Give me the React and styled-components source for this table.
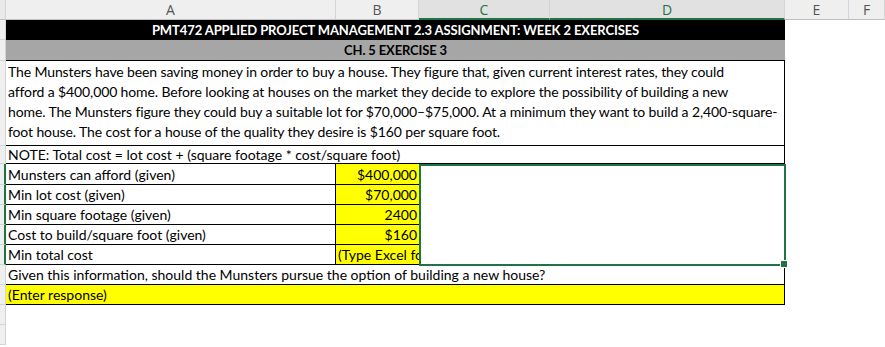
import styled, { createGlobalStyle } from "styled-components";

const GlobalStyle = createGlobalStyle`
  html, body {
    margin: 0;
    padding: 0;
    background: #ffffff;
    overflow: hidden;
  }
  body {
    font-family: Lato, "Liberation Sans", sans-serif;
  }
`;

const columns = ["A", "B", "C", "D", "E", "F"];
const selectedCols = ["C", "D"];

const paragraph = [
  "The Munsters have been saving money in order to buy a house. They figure that, given current interest rates, they could",
  "afford a $400,000 home. Before looking at houses on the market they decide to explore the possibility of building a new",
  "home. The Munsters figure they could buy a suitable lot for $70,000\u2013$75,000. At a minimum they want to build a 2,400-square-",
  "foot house. The cost for a house of the quality they desire is $160 per square foot.",
];

const givens = [
  { label: "Munsters can afford (given)", value: "$400,000" },
  { label: "Min lot cost (given)", value: "$70,000" },
  { label: "Min square footage (given)", value: "2400" },
  { label: "Cost to build/square foot (given)", value: "$160" },
  { label: "Min total cost", value: "(Type Excel formula here)", left: true },
];

function App() {
  return (
    <>
      <GlobalStyle />
      <Sheet>
        <Corner />
        {columns.map((c) => (
          <ColHeader key={c} $selected={selectedCols.includes(c)}>
            {c}
          </ColHeader>
        ))}

        <RowHead />
        <Title>PMT472 APPLIED PROJECT MANAGEMENT 2.3 ASSIGNMENT: WEEK 2 EXERCISES</Title>
        <Empty />
        <Empty />

        <RowHead />
        <SubTitle>CH. 5 EXERCISE 3</SubTitle>
        <Empty />
        <Empty />

        <RowHead />
        <Paragraph>
          {paragraph.map((line) => (
            <Line key={line}>{line}</Line>
          ))}
        </Paragraph>
        <Empty />
        <Empty />

        <RowHead />
        <Wide>NOTE: Total cost = lot cost + (square footage * cost/square foot)</Wide>
        <Empty />
        <Empty />

        {givens.map((g) => (
          <Row key={g.label}>
            <RowHead $selected />
            <Label>{g.label}</Label>
            <Value $left={g.left}>{g.value}</Value>
            <Blank />
            <Blank $edge />
            <Empty />
            <Empty />
          </Row>
        ))}

        <RowHead />
        <Wide>Given this information, should the Munsters pursue the option of building a new house?</Wide>
        <Empty />
        <Empty />

        <RowHead />
        <Wide $fill="#ffff00">(Enter response)</Wide>
        <Empty />
        <Empty />

        <RowHead />
        <Empty $span={6} />
        <RowHead />
        <Empty $span={6} />

        <Selection>
          <Handle />
        </Selection>
      </Sheet>
    </>
  );
}

const Sheet = styled.div`
  position: relative;
  display: grid;
  grid-template-columns: 6px 330px 83px 131px 235px 64px 1fr;
  grid-template-rows: 20px 20px 21px 85px 18px 21px 20px 20px 20px 20px 20px 20px 20px 20px;
  width: 885px;
  height: 347px;
  font-size: 14px;
  color: #000;
`;

const Corner = styled.div`
  background: #e9e9e9;
  border-right: 1px solid #d4d4d4;
  border-bottom: 1px solid #bfbfbf;
  box-sizing: border-box;
`;

const ColHeader = styled.div`
  display: flex;
  align-items: center;
  justify-content: center;
  box-sizing: border-box;
  background: ${(p) => (p.$selected ? "#e1e1e1" : "#efefef")};
  color: ${(p) => (p.$selected ? "#217346" : "#555")};
  border-right: 1px solid #d4d4d4;
  border-bottom: ${(p) => (p.$selected ? "2px solid #217346" : "1px solid #bfbfbf")};
  font-family: "Open Sans", "Noto Sans", sans-serif;
  font-size: 14px;
  padding-top: ${(p) => (p.$selected ? "1px" : "0")};
`;

const RowHead = styled.div`
  background: #efefef;
  box-sizing: border-box;
  border-bottom: 1px solid #d4d4d4;
  border-right: ${(p) => (p.$selected ? "2px solid #217346" : "1px solid #d4d4d4")};
`;

const Row = styled.div`
  display: contents;
`;

const Empty = styled.div`
  grid-column: span ${(p) => p.$span || 1};
  background: #fff;
`;

const Title = styled.div`
  grid-column: span 4;
  background: #000;
  color: #fff;
  font-size: 13px;
  font-weight: 700;
  letter-spacing: -0.1px;
  display: flex;
  align-items: center;
  justify-content: center;
  white-space: nowrap;
  box-sizing: border-box;
`;

const SubTitle = styled.div`
  grid-column: span 4;
  background: #a6a6a6;
  font-size: 13px;
  font-weight: 700;
  letter-spacing: -0.15px;
  display: flex;
  align-items: center;
  justify-content: center;
  border-bottom: 1px solid #000;
  box-sizing: border-box;
`;

const Paragraph = styled.div`
  grid-column: span 4;
  display: flex;
  flex-direction: column;
  justify-content: flex-end;
  padding: 0 0 3px 2px;
  letter-spacing: -0.12px;
  border-right: 1px solid #000;
  border-bottom: 1px solid #000;
  box-sizing: border-box;
`;

const Line = styled.div`
  white-space: nowrap;
  height: 20px;
  line-height: 20px;
`;

const Wide = styled.div`
  grid-column: span 4;
  background: ${(p) => p.$fill || "#fff"};
  display: flex;
  align-items: center;
  padding-left: 2px;
  white-space: nowrap;
  overflow: hidden;
  border-right: 1px solid #000;
  border-bottom: 1px solid #000;
  box-sizing: border-box;
`;

const Label = styled.div`
  display: flex;
  align-items: center;
  padding-left: 2px;
  white-space: nowrap;
  border-right: 1px solid #000;
  border-bottom: 1px solid #000;
  box-sizing: border-box;
`;

const Value = styled.div`
  display: flex;
  align-items: center;
  justify-content: ${(p) => (p.$left ? "flex-start" : "flex-end")};
  padding: 0 2px;
  background: #ffff00;
  white-space: nowrap;
  overflow: hidden;
  border-bottom: 1px solid #000;
  box-sizing: border-box;
`;

const Blank = styled.div`
  background: #fff;
  border-right: ${(p) => (p.$edge ? "1px solid #000" : "none")};
  box-sizing: border-box;
`;

const Selection = styled.div`
  position: absolute;
  left: 419px;
  top: 164px;
  width: 367px;
  height: 102px;
  border: 2px solid #217346;
  box-sizing: border-box;
  pointer-events: none;
`;

const Handle = styled.div`
  position: absolute;
  right: -4px;
  bottom: -4px;
  width: 6px;
  height: 6px;
  background: #217346;
  border: 1px solid #fff;
`;

export default App;
